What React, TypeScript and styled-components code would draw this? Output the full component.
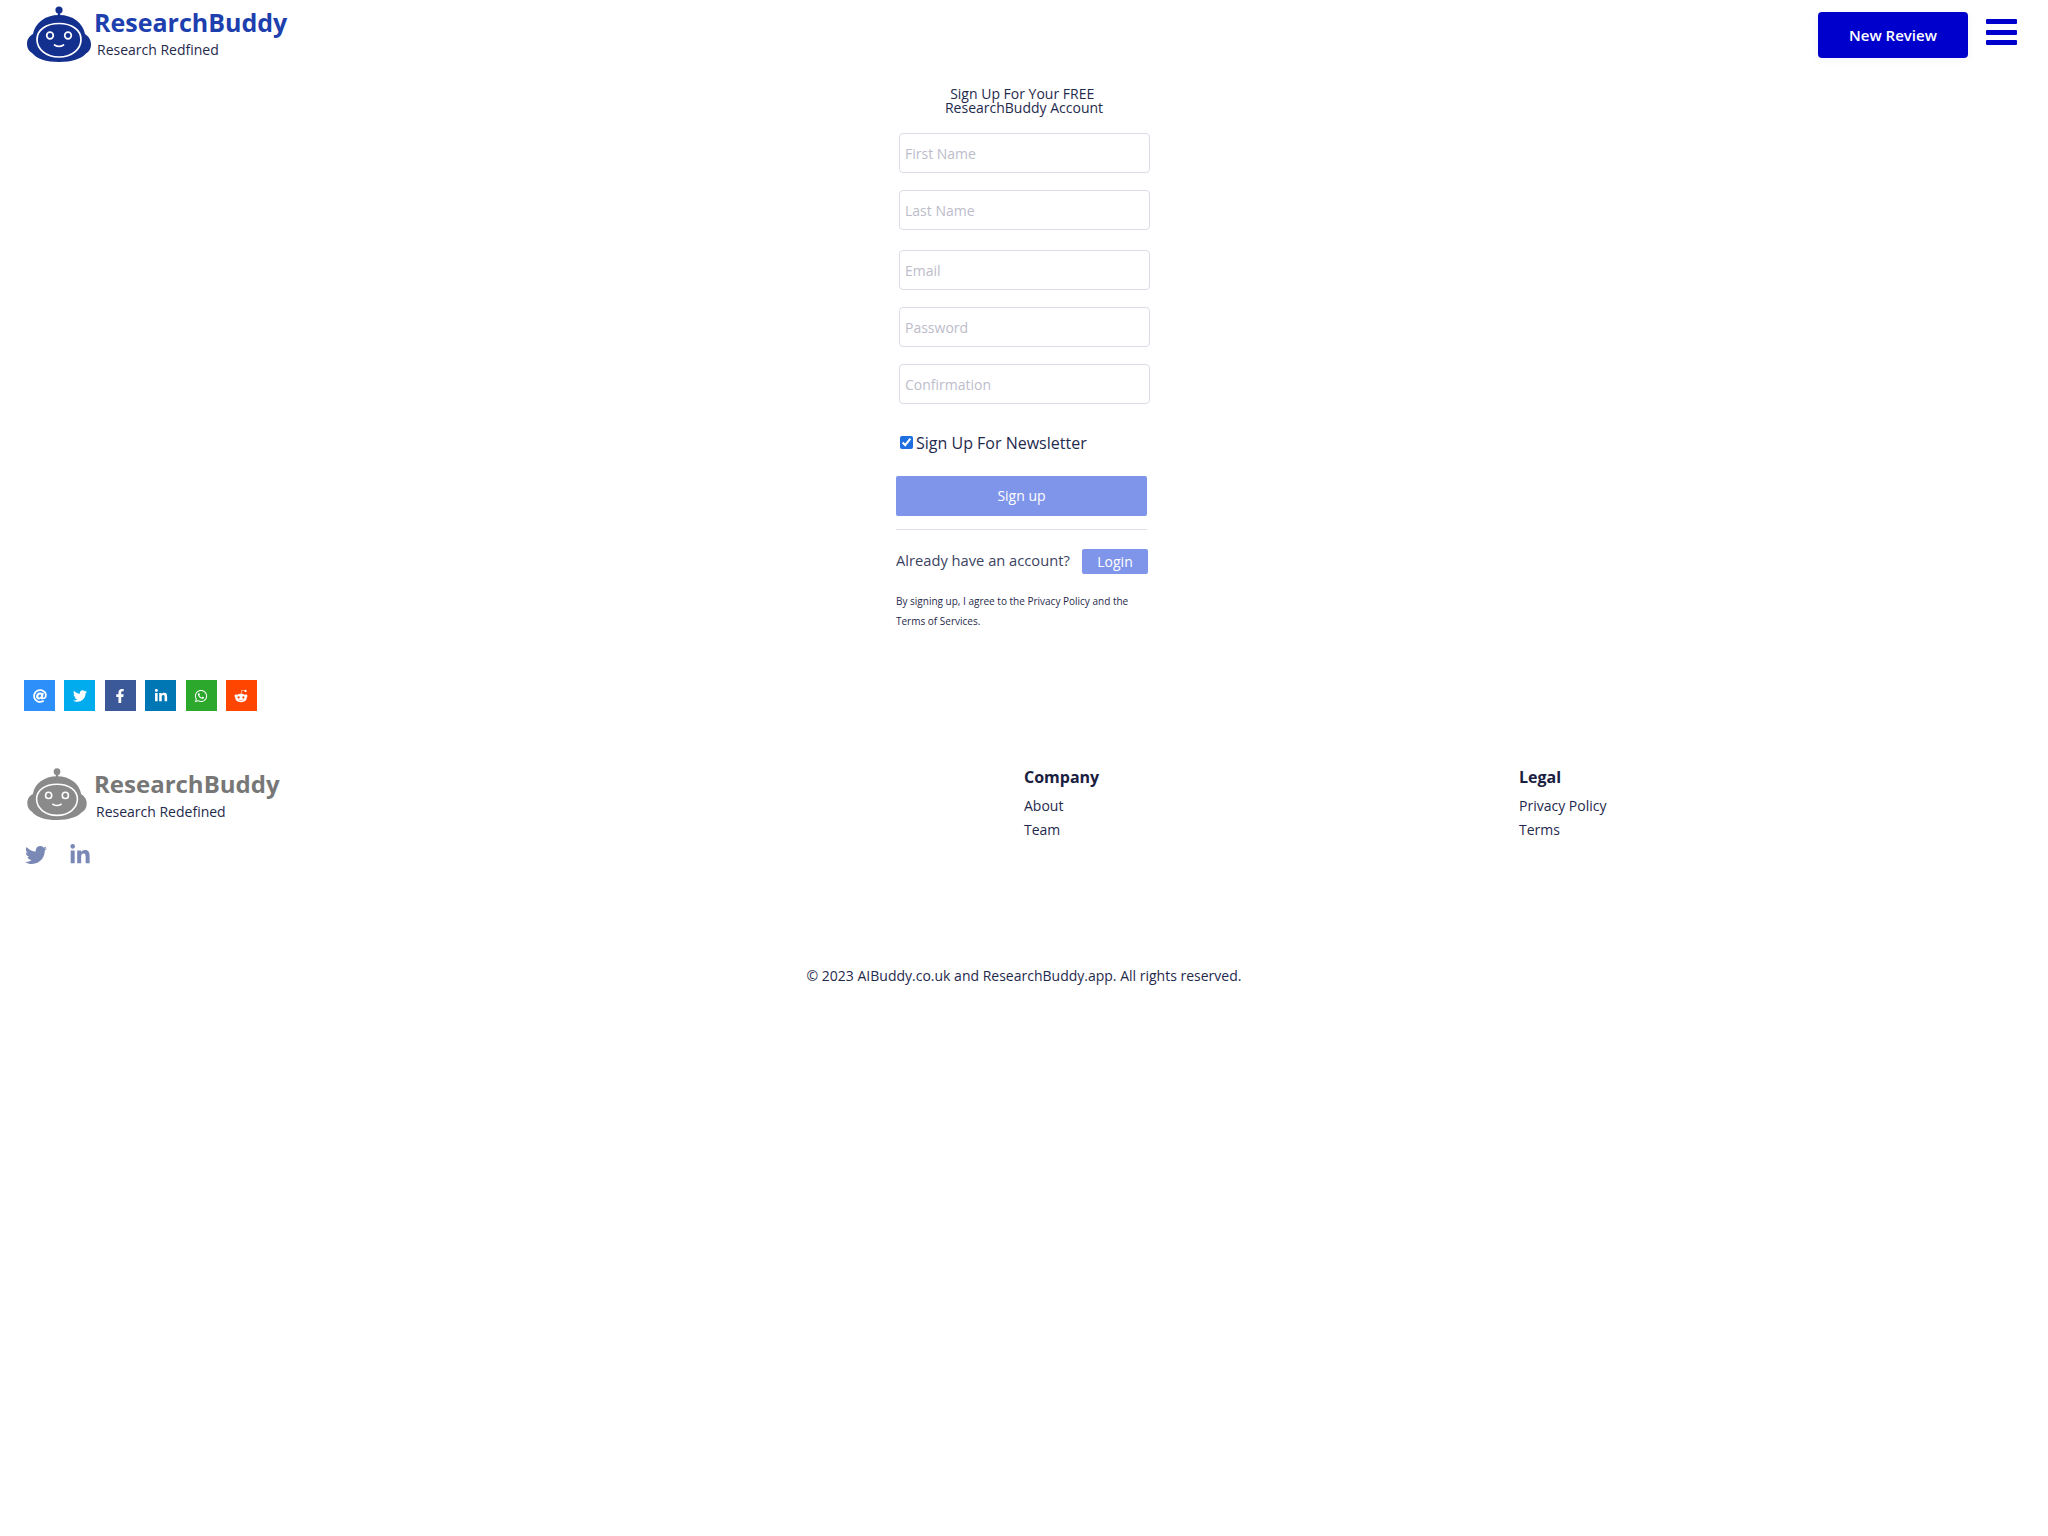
import React from "react";
import styled, { createGlobalStyle } from "styled-components";
import { FaTwitter, FaFacebookF, FaLinkedinIn, FaWhatsapp, FaRedditAlien, FaAt } from "react-icons/fa";

const Global = createGlobalStyle`
  html, body { margin: 0; padding: 0; background: #fff; }
  body { font-family: "Open Sans", "Liberation Sans", sans-serif; color: #1f2a4d; }
  * { box-sizing: border-box; }
`;

const Page = styled.div`
  width: 2048px;
  min-height: 1536px;
  background: #fff;
`;

const Header = styled.header`
  height: 66px;
  display: flex;
  align-items: flex-start;
  justify-content: space-between;
  padding: 6px 31px 0 27px;
`;

const Brand = styled.div`
  display: flex;
  align-items: flex-start;
  gap: 3px;
`;

const BrandText = styled.div`
  display: flex;
  flex-direction: column;
`;

const BrandName = styled.div<{ $foot?: boolean }>`
  font-size: ${(p) => (p.$foot ? "24px" : "25px")};
  line-height: 32px;
  font-weight: 700;
  color: ${(p) => (p.$foot ? "#777777" : "#1e3fae")};
`;

const BrandTag = styled.div<{ $foot?: boolean }>`
  font-size: 14px;
  line-height: 18px;
  margin-left: ${(p) => (p.$foot ? "2px" : "3px")};
  margin-top: ${(p) => (p.$foot ? "3px" : "3px")};
  color: #1f2a4d;
`;

const HeaderActions = styled.div`
  display: flex;
  align-items: flex-start;
  gap: 18px;
  padding-top: 6px;
`;

const NewReview = styled.button`
  width: 150px;
  height: 46px;
  border: 0;
  border-radius: 4px;
  background: #0000cc;
  color: #fff;
  font: 600 15px "Open Sans", sans-serif;
  box-shadow: 0 2px 8px rgba(0, 0, 160, 0.05);
`;

const Burger = styled.div`
  width: 31px;
  height: 26px;
  margin-top: 7px;
  display: flex;
  flex-direction: column;
  justify-content: space-between;
`;

const BurgerBar = styled.span`
  display: block;
  height: 5px;
  border-radius: 1px;
  background: #0000cc;
`;

const FormWrap = styled.main`
  width: 256px;
  margin-left: 896px;
  display: flex;
  flex-direction: column;
`;

const FormTitle = styled.h1`
  margin: 21px 0 0;
  width: 256px;
  font-size: 14px;
  line-height: 14px;
  font-weight: 400;
  text-align: center;
  color: #1f2a4d;
`;

const Input = styled.input<{ $top: number }>`
  display: block;
  width: 251px;
  height: 40px;
  margin: ${(p) => p.$top}px 0 0 3px;
  padding: 0 6px 0 5px;
  border: 1px solid #dcdce8;
  border-radius: 4px;
  background: #fff;
  font: 14px "Open Sans", sans-serif;
  &::placeholder { color: #bcbcca; opacity: 1; }
`;

const CheckRow = styled.label`
  display: flex;
  align-items: center;
  margin: 26px 0 0 4px;
  height: 24px;
  font-size: 16px;
  color: #1f2a4d;
`;

const Check = styled.input`
  width: 13px;
  height: 13px;
  margin: 0 3px 0 0;
  accent-color: #1f6fe0;
`;

const CheckText = styled.span`
  padding-top: 1px;
`;

const SignUp = styled.button`
  width: 251px;
  height: 40px;
  margin-top: 22px;
  padding-bottom: 2px;
  border: 0;
  border-radius: 2px;
  background: #7f95ea;
  color: #fff;
  font: 14px "Open Sans", sans-serif;
`;

const Divider = styled.hr`
  width: 251px;
  height: 1px;
  margin: 13px 0 0;
  border: 0;
  background: #dfdfe8;
`;

const LoginRow = styled.div`
  width: 252px;
  margin-top: 19px;
  display: flex;
  align-items: center;
  justify-content: space-between;
  font-size: 14.7px;
  color: #3b4361;
`;

const LoginPrompt = styled.span`
  padding-bottom: 3px;
`;

const Login = styled.button`
  width: 66px;
  height: 25px;
  border: 0;
  border-radius: 2px;
  background: #7f95ea;
  color: #fff;
  font: 14px "Open Sans", sans-serif;
`;

const Legal = styled.p`
  width: 240px;
  margin: 17px 0 0;
  padding-bottom: 1px;
  font-size: 10px;
  line-height: 20px;
  color: #1f2a4d;
`;

const ShareRow = styled.div`
  display: flex;
  gap: 9.4px;
  margin: 48px 0 0 24px;
`;

const Share = styled.a<{ $bg: string }>`
  width: 31px;
  height: 31px;
  display: flex;
  align-items: center;
  justify-content: center;
  background: ${(p) => p.$bg};
  color: #fff;
  font-size: 14px;
`;

const Footer = styled.footer`
  display: grid;
  grid-template-columns: 1000px 495px 1fr;
  margin-top: 54px;
  padding-left: 24px;
  height: 201px;
`;

const FootBrand = styled.div`
  display: flex;
  flex-direction: column;
  padding: 3px 0 0 3px;
`;

const FootBrandRow = styled(Brand)`
  gap: 7px;
`;

const FootSocial = styled.div`
  display: flex;
  gap: 22px;
  margin: 23px 0 0 -2px;
  color: #7a88b5;
  font-size: 22px;
`;

const FootCol = styled.div`
  display: flex;
  flex-direction: column;
  padding-top: 1px;
`;

const FootHead = styled.div`
  font-size: 16px;
  line-height: 22px;
  font-weight: 700;
  margin-bottom: 6px;
  color: #1a2040;
`;

const FootLink = styled.a`
  font-size: 14px;
  line-height: 24px;
  color: #1f2a4d;
`;

const Copy = styled.div`
  text-align: center;
  font-size: 14px;
  line-height: 20px;
  color: #1f2a4d;
`;

const Robot = ({ w, h, fill }: { w: number; h: number; fill: string }) => (
  <svg width={w} height={h} viewBox="0 0 64 56" aria-hidden="true">
    <circle cx="32" cy="4" r="3.6" fill={fill} />
    <rect x="30.8" y="5" width="2.4" height="6" fill={fill} />
    <path
      d="M32 9C18 9 8 17 6 28 2.500 30 0 33 0 38c0 4 2 7.500 5 9C10 53 19 56 32 56s22-3 27-8.500c3-1.500 5-5 5-9 0-5-2.500-8-6-10.500C56 17 46 9 32 9Z"
      fill={fill}
    />
    <path
      d="M32 17.500c-13 0-22 6.500-22 16S19 51 32 51s22-8 22-17.500-9-16-22-16Z"
      fill="none"
      stroke="#fff"
      strokeWidth="1.700"
    />
    <circle cx="23" cy="29.500" r="3.300" fill="none" stroke="#fff" strokeWidth="1.700" />
    <circle cx="41" cy="29.500" r="3.300" fill="none" stroke="#fff" strokeWidth="1.700" />
    <path d="M27.500 39c2.800 1.800 6.200 1.800 9 0" fill="none" stroke="#fff" strokeWidth="1.700" strokeLinecap="round" />
  </svg>
);

const shares = [
  { bg: "#2d8ffa", icon: <FaAt /> },
  { bg: "#00aced", icon: <FaTwitter /> },
  { bg: "#3b5998", icon: <FaFacebookF /> },
  { bg: "#0077b5", icon: <FaLinkedinIn /> },
  { bg: "#2ca82c", icon: <FaWhatsapp /> },
  { bg: "#ff4500", icon: <FaRedditAlien /> },
];

export default function App() {
  return (
    <Page>
      <Global />
      <Header>
        <Brand>
          <Robot w={64} h={56} fill="#14308f" />
          <BrandText>
            <BrandName>ResearchBuddy</BrandName>
            <BrandTag>Research Redfined</BrandTag>
          </BrandText>
        </Brand>
        <HeaderActions>
          <NewReview>New Review</NewReview>
          <Burger>
            <BurgerBar />
            <BurgerBar />
            <BurgerBar />
          </Burger>
        </HeaderActions>
      </Header>
      <FormWrap>
        <FormTitle>
          Sign Up For Your FREE&nbsp;
          <br />
          ResearchBuddy Account
        </FormTitle>
        <Input $top={18} placeholder="First Name" />
        <Input $top={17} placeholder="Last Name" />
        <Input $top={20} placeholder="Email" />
        <Input $top={17} placeholder="Password" />
        <Input $top={17} placeholder="Confirmation" />
        <CheckRow>
          <Check type="checkbox" defaultChecked />
          <CheckText>Sign Up For Newsletter</CheckText>
        </CheckRow>
        <SignUp>Sign up</SignUp>
        <Divider />
        <LoginRow>
          <LoginPrompt>Already have an account?</LoginPrompt>
          <Login>Login</Login>
        </LoginRow>
        <Legal>By signing up, I agree to the Privacy Policy and the Terms of Services.</Legal>
      </FormWrap>
      <ShareRow>
        {shares.map((s, i) => (
          <Share key={i} $bg={s.bg}>
            {s.icon}
          </Share>
        ))}
      </ShareRow>
      <Footer>
        <FootBrand>
          <FootBrandRow>
            <Robot w={60} h={52} fill="#8a8a8a" />
            <BrandText>
              <BrandName $foot>ResearchBuddy</BrandName>
              <BrandTag $foot>Research Redefined</BrandTag>
            </BrandText>
          </FootBrandRow>
          <FootSocial>
            <FaTwitter />
            <FaLinkedinIn />
          </FootSocial>
        </FootBrand>
        <FootCol>
          <FootHead>Company</FootHead>
          <FootLink>About</FootLink>
          <FootLink>Team</FootLink>
        </FootCol>
        <FootCol>
          <FootHead>Legal</FootHead>
          <FootLink>Privacy Policy</FootLink>
          <FootLink>Terms</FootLink>
        </FootCol>
      </Footer>
      <Copy>© 2023 AIBuddy.co.uk and ResearchBuddy.app. All rights reserved.</Copy>
    </Page>
  );
}
